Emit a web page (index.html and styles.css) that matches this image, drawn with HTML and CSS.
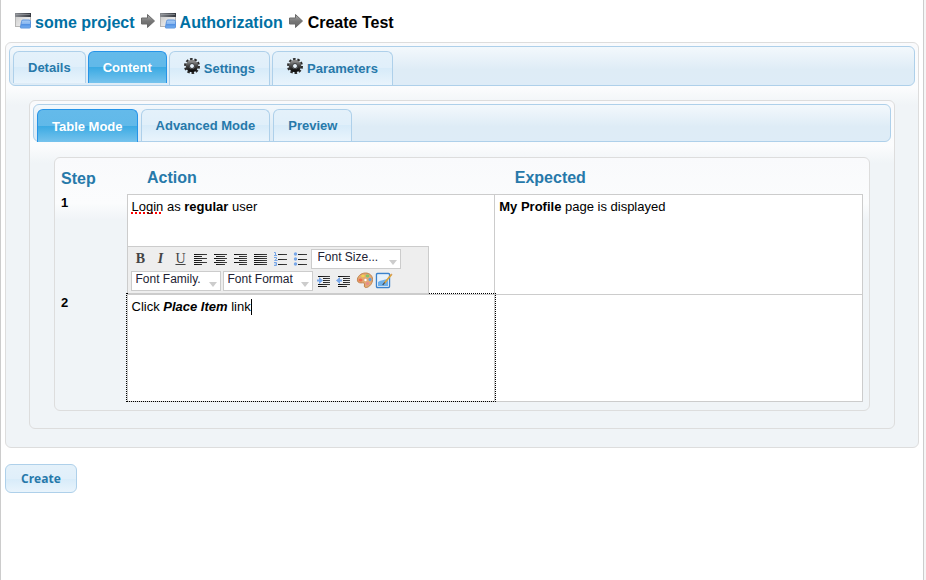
FILE: index.html
```html
<!DOCTYPE html>
<html lang="en">
<head>
<meta charset="utf-8">
<title>Create Test</title>
<link rel="stylesheet" href="styles.css">
</head>
<body>
<svg class="defs" width="0" height="0" aria-hidden="true">
  <defs>
    <linearGradient id="grey" x1="0" y1="0" x2="0" y2="1"><stop offset="0" stop-color="#b0b0b0"/><stop offset=".5" stop-color="#777"/><stop offset="1" stop-color="#666"/></linearGradient>
    <linearGradient id="win" x1="0" y1="0" x2="1" y2="1"><stop offset="0" stop-color="#c8c8c8"/><stop offset="1" stop-color="#fafafa"/></linearGradient>
    <linearGradient id="bar" x1="0" y1="0" x2="1" y2="0"><stop offset="0" stop-color="#8a8d92"/><stop offset="1" stop-color="#33373e"/></linearGradient>
    <linearGradient id="blue" x1="0" y1="0" x2="0" y2="1"><stop offset="0" stop-color="#a9cdf5"/><stop offset=".45" stop-color="#8ab8f0"/><stop offset=".5" stop-color="#4f8ee2"/><stop offset="1" stop-color="#76b1f2"/></linearGradient>
    <linearGradient id="dark" x1="0" y1="0" x2="0" y2="1"><stop offset="0" stop-color="#888"/><stop offset=".5" stop-color="#444"/><stop offset="1" stop-color="#111"/></linearGradient>
    <linearGradient id="line" gradientUnits="userSpaceOnUse" x1="0" y1="0" x2="20" y2="0"><stop offset=".2" stop-color="#111"/><stop offset="1" stop-color="#555"/></linearGradient>
    <symbol id="i-project" viewBox="0 0 16 16">
      <rect x=".5" y=".5" width="15" height="13" fill="url(#win)" stroke="#b4b4b4"/>
      <rect x="0" y="0" width="16" height="4" fill="url(#bar)"/>
      <path d="M1 1.500h14" stroke="#a5a8ad" opacity=".6"/>
      <path d="M6.500 8.500q0-1.500 1.500-1.500h6q1.500 0 1.500 1.500v5.500q0 1-1 1h-8.500q-1 0-.5-1z" fill="url(#blue)" stroke="#5c94dd"/>
    </symbol>
    <symbol id="i-arrow" viewBox="0 0 16 16">
      <path d="M1.500 5h6V1.500l7 6.500-7 6.500V11h-6z" fill="url(#grey)" stroke="#6a6a6a" stroke-linejoin="round"/>
    </symbol>
    <symbol id="i-gear" viewBox="0 0 16 16">
      <circle cx="8" cy="8" r="6.800" fill="none" stroke="#2b2b2b" stroke-width="2.400" stroke-dasharray="2.500 1.770"/>
      <circle cx="8" cy="8" r="4.400" fill="none" stroke="url(#dark)" stroke-width="3.600"/>
      <circle cx="8" cy="8" r="2.500" fill="#e8f2fa" stroke="#111" stroke-width=".8"/>
    </symbol>
  </defs>
</svg>

<div class="page">
  <nav class="crumbs" aria-label="Breadcrumb">
    <svg class="ico"><use href="#i-project"/></svg><a href="#project">some project</a>
    <svg class="ico arrow"><use href="#i-arrow"/></svg>
    <svg class="ico"><use href="#i-project"/></svg><a href="#suite">Authorization</a>
    <svg class="ico arrow"><use href="#i-arrow"/></svg><span>Create Test</span>
  </nav>

  <main>
    <section class="panel outer">
      <nav class="tabs main-tabs" aria-label="Test sections">
        <a class="tab short" href="#details">Details</a>
        <a class="tab short active" href="#content">Content</a>
        <a class="tab" href="#settings"><svg class="gear"><use href="#i-gear"/></svg>Settings</a>
        <a class="tab" href="#parameters"><svg class="gear"><use href="#i-gear"/></svg>Parameters</a>
      </nav>

      <section class="panel middle">
        <nav class="tabs sub-tabs" aria-label="Editing mode">
          <a class="tab active" href="#table">Table Mode</a>
          <a class="tab" href="#advanced">Advanced Mode</a>
          <a class="tab" href="#preview">Preview</a>
        </nav>

        <section class="panel inner">
          <table class="steps">
            <thead>
              <tr><th class="num">Step</th><th>Action</th><th>Expected</th></tr>
            </thead>
            <tbody>
              <tr class="first">
                <td class="num">1</td>
                <td class="cell">
                  <div class="edit"><span class="misspelt">Login</span> as <b>regular</b> user</div>
                  <div class="toolbar" role="toolbar" aria-label="Text formatting">
                    <button class="tool serif" type="button" aria-label="Bold"><b>B</b></button>
                    <button class="tool serif" type="button" aria-label="Italic"><b><i>I</i></b></button>
                    <button class="tool serif" type="button" aria-label="Underline"><u>U</u></button>
                    <button class="tool" type="button" aria-label="Align left"><svg viewBox="0 0 20 20"><path stroke="url(#line)" d="M3 5.500h13M3 7.500h8M3 9.500h13M3 11.500h8M3 13.500h13M3 15.500h8"/></svg></button>
                    <button class="tool" type="button" aria-label="Align center"><svg viewBox="0 0 20 20"><path stroke="url(#line)" d="M3 5.500h13M5 7.500h9M3 9.500h13M5 11.500h9M3 13.500h13M5 15.500h9"/></svg></button>
                    <button class="tool" type="button" aria-label="Align right"><svg viewBox="0 0 20 20"><path stroke="url(#line)" d="M3 5.500h13M8 7.500h8M3 9.500h13M8 11.500h8M3 13.500h13M8 15.500h8"/></svg></button>
                    <button class="tool" type="button" aria-label="Justify"><svg viewBox="0 0 20 20"><path stroke="url(#line)" d="M3 5.500h13M3 7.500h13M3 9.500h13M3 11.500h13M3 13.500h13M3 15.500h13"/></svg></button>
                    <button class="tool" type="button" aria-label="Numbered list"><svg viewBox="0 0 20 20"><path stroke="url(#line)" d="M7 5.500h9M7 10.500h9M7 15.500h9"/><path fill="none" stroke="#78a7e8" d="M3 3.500h1.500v3M3 6.500h3M3 8.500h2.500v1.500l-2 1.500h3M3 13.500h2.500v3H3M3.500 15h2"/></svg></button>
                    <button class="tool" type="button" aria-label="Bulleted list"><svg viewBox="0 0 20 20"><path stroke="url(#line)" d="M7 5.500h9M7 10.500h9M7 15.500h9"/><g fill="#78a7e8"><circle cx="4.500" cy="5" r="1.700"/><circle cx="4.500" cy="10" r="1.700"/><circle cx="4.500" cy="15" r="1.700"/></g></svg></button>
                    <span class="pick wide"><select aria-label="Font size"><option>Font Size...</option></select></span>
                    <span class="pick"><select aria-label="Font family"><option>Font Family.</option></select></span>
                    <span class="pick"><select aria-label="Font format"><option>Font Format</option></select></span>
                    <button class="tool" type="button" aria-label="Indent"><svg viewBox="0 0 20 20"><path stroke="url(#line)" d="M3 5.500h12M8 7.500h7M8 9.500h7M8 11.500h7M3 13.500h12M3 15.500h9"/><path fill="#78a7e8" d="M2 8.500h2V6l4 3.500L4 13v-2.500H2z"/></svg></button>
                    <button class="tool" type="button" aria-label="Outdent"><svg viewBox="0 0 20 20"><path stroke="url(#line)" d="M3 5.500h12M8 7.500h7M8 9.500h7M8 11.500h7M3 13.500h12M3 15.500h9"/><path fill="#78a7e8" d="M7 8.500H5V6L1 9.500 5 13v-2.500h2z"/></svg></button>
                    <button class="tool" type="button" aria-label="Text color"><svg viewBox="0 0 20 20"><path fill="#e2a974" stroke="#c2824a" d="M10.500 2c4 0 7 2.500 7 6.500 0 4-3 7.500-6 8-2 .3-2.500-1-2-2.500.4-1.600-.5-2.300-2-2.200-2 .2-4.500.2-5-2C1.800 5.500 6 2 10.500 2z"/><ellipse cx="5.500" cy="9" rx="2" ry="1.500" fill="#f06a4a"/><ellipse cx="8" cy="5" rx="1.800" ry="1.300" fill="#f4d24c"/><ellipse cx="12.500" cy="5" rx="1.800" ry="1.400" fill="#7fc46a"/><ellipse cx="15" cy="8.500" rx="1.500" ry="1.700" fill="#5f9fe0"/><circle cx="12.500" cy="12.500" r="1.600" fill="#e98a8a"/><circle cx="10.500" cy="9" r="1.200" fill="#fff"/></svg></button>
                    <button class="tool" type="button" aria-label="Edit source"><svg viewBox="0 0 20 20"><rect x="1.500" y="2.500" width="13" height="14" rx="1" fill="#fff" stroke="#3a82cc" stroke-width="1.400"/><path d="M3 4h10v5L3 13z" fill="#e6f1fb"/><path d="M3 11c3-2 6-2 10-3v7H3z" fill="#6eb0ea"/><path d="M16.500 3.500L9.500 12" stroke="#dca23a" stroke-width="1.800"/><path d="M16 3l1 1" stroke="#d9a060" stroke-width="1.500"/><path d="M9.700 11.500l-2 2.500" stroke="#444" stroke-width="1.200"/></svg></button>
                  </div>
                </td>
                <td class="cell"><div class="edit"><b>My Profile</b> page is displayed</div></td>
              </tr>
              <tr class="second">
                <td class="num">2</td>
                <td class="cell focused"><div class="edit">Click <b><i>Place Item</i></b> link<span class="caret"></span></div></td>
                <td class="cell"><div class="edit"></div></td>
              </tr>
            </tbody>
          </table>
        </section>
      </section>
    </section>

    <button class="create" type="button">Create</button>
  </main>
</div>
</body>
</html>
```

FILE: styles.css
```css
* { box-sizing: border-box; }

body {
  margin: 0;
  background: #f5f5f5;
  font: 13px/16px "Liberation Sans", Arial, sans-serif;
  color: #000;
}

a { text-decoration: none; }
svg { display: block; flex: none; }
.defs { position: absolute; }

.page {
  min-height: 100vh;
  margin-right: 2px;
  padding: 13px 4px 0;
  background: #fff;
  border: solid #ccc;
  border-width: 0 1px;
}

.crumbs {
  display: flex;
  align-items: center;
  gap: 4px;
  height: 20px;
  margin: 0 0 9px 10px;
  font-size: 16px;
  font-weight: bold;
}
.crumbs a { color: #0070a3; }
.ico { width: 16px; height: 16px; margin-bottom: 4px; }
.arrow { margin-left: 1px; }

.panel {
  border: 1px solid #ddd;
  border-radius: 6px;
  background: linear-gradient(#f9fafc 0, #fbfcfd 45px, #f0f4f7 62px);
}
.outer { padding: 3px 3px 18px; }
.middle { margin: 14px 20px 0; padding: 3px 3px 17px; }
.inner { margin: 15px 21px 0; padding: 5px 6px 8px; }

.tabs {
  display: flex;
  align-items: flex-start;
  gap: 3px;
  padding: 4px 3px 0;
  border: 1px solid #aed0ea;
  border-radius: 6px;
  background: linear-gradient(#f3f8fc 0, #deecf6 60%, #deecf7);
}
.main-tabs { gap: 2px; height: 40px; }
.sub-tabs { height: 38px; }

.tab {
  display: flex;
  align-items: center;
  gap: 4px;
  height: 34px;
  padding: 0 14px;
  border: 1px solid #aed0ea;
  border-bottom: 0;
  border-radius: 6px 6px 0 0;
  background: linear-gradient(#e4f1fa 0, #e0effa 50%, #d7ebf9 50%, #e9f4fc);
  color: #2779aa;
  font-weight: bold;
}
.short { height: 32px; }
.sub-tabs .tab { height: 32px; padding-top: 1px; }
.sub-tabs .active { height: 33px; }
.tab.active {
  border-color: #2694e8;
  background: linear-gradient(#64baea 0, #61b9e9 50%, #3baae3 50%, #76c3ed);
  color: #fff;
}
.gear { width: 16px; height: 16px; margin-bottom: 5px; }

.steps {
  width: 100%;
  table-layout: fixed;
  border-collapse: collapse;
}
.steps th {
  height: 31px;
  padding: 0 20px;
  color: #2779aa;
  font-size: 16px;
  text-align: left;
  vertical-align: middle;
}
.steps .num {
  width: 66px;
  padding: 0;
  text-align: left;
}
.steps td.num {
  padding-top: 1px;
  font-weight: bold;
  vertical-align: top;
}
.cell {
  position: relative;
  padding: 4px;
  border: 1px solid #ccc;
  background: #fff;
  vertical-align: top;
}
.first { height: 100px; }
.second { height: 107px; }
.focused {
  z-index: 1;
  outline: 1px dotted #000;
}

.misspelt {
  text-decoration: underline dotted red 2px;
  text-decoration-skip-ink: none;
  text-underline-offset: 2px;
}
.caret {
  display: inline-block;
  height: 16px;
  border-left: 1px solid #000;
  vertical-align: bottom;
}

.toolbar {
  position: absolute;
  z-index: 2;
  bottom: 0;
  left: 0;
  display: flex;
  flex-wrap: wrap;
  gap: 2px 0;
  width: 301px;
  padding: 2px 3px;
  border: solid #ccc;
  border-width: 1px 1px 1px 0;
  background: #eee;
}
.tool {
  width: 20px;
  height: 20px;
  padding: 0;
  border: 0;
  background: none;
  color: #444;
}
.tool svg { width: 20px; height: 20px; }
.serif { font: 14px/20px "Liberation Serif", serif; }
.pick {
  position: relative;
  width: 90px;
  margin-right: 2px;
}
.wide { margin-right: 24px; }
.pick::after {
  content: "";
  position: absolute;
  right: 4px;
  bottom: 4px;
  border: solid transparent;
  border-width: 5px 4px 0;
  border-top-color: #ccc;
  pointer-events: none;
}
.pick select {
  appearance: none;
  width: 100%;
  height: 20px;
  padding: 0 4px 4px;
  border: 1px solid #ccc;
  border-radius: 0;
  background: #fff;
  color: #223;
  font: 12px "Liberation Sans", Arial, sans-serif;
}
.wide select { padding-left: 6px; }

.create {
  display: block;
  height: 29px;
  margin-top: 16px;
  padding: 0 15px;
  border: 1px solid #aed0ea;
  border-radius: 6px;
  background: linear-gradient(#e4f1fa 0, #e0effa 50%, #d7ebf9 50%, #e9f4fc);
  color: #2779aa;
  font: bold 12px "Open Sans", sans-serif;
}
```
